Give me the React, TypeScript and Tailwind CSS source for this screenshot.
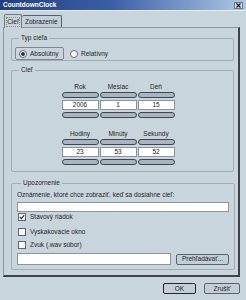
import * as React from "react";

const Pill = () => (
  <div className="h-[6px] w-full rounded-full border border-[#3d4751] bg-[#a9b4be]" />
);

const Spinner: React.FC<{ label: string; value: string }> = ({ label, value }) => (
  <div className="flex w-[37px] flex-col items-stretch">
    <span className="h-[8px] text-center leading-[8px]">{label}</span>
    <div className="mt-[1px]">
      <Pill />
    </div>
    <div className="mt-[2px] flex h-[10px] items-center justify-center border border-[#8a959e] bg-white leading-[8px]">
      {value}
    </div>
    <div className="mt-[2px]">
      <Pill />
    </div>
  </div>
);

const Check: React.FC<{ label: string; checked?: boolean; className?: string }> = ({
  label,
  checked,
  className,
}) => (
  <div className={`flex items-center pl-[1px] ${className ?? "h-[13px]"}`}>
    <span className="flex h-[8px] w-[8px] items-center justify-center border border-[#5d6770] bg-white">
      {checked && (
        <svg width="6" height="6" viewBox="0 0 6 6">
          <path d="M0.8 3 L2.4 4.6 L5.2 1.2" fill="none" stroke="#222" strokeWidth="1.1" />
        </svg>
      )}
    </span>
    <span className="ml-[4px] leading-[8px]">{label}</span>
  </div>
);

const Group: React.FC<{ title: string; className?: string; children: React.ReactNode }> = ({
  title,
  className,
  children,
}) => (
  <fieldset className={`m-0 rounded-[2px] border border-[#a2acb5] px-[3px] ${className ?? ""}`}>
    <legend className="ml-[4px] px-[2px] leading-[8px]">{title}</legend>
    {children}
  </fieldset>
);

export default function App() {
  return (
    <div className="flex h-[300px] w-[246px] flex-col overflow-hidden bg-[#c9d5dd] font-['Liberation_Sans',Arial,sans-serif] text-[6.5px] text-[#222]">
      {/* title bar */}
      <div className="flex h-[11px] items-center justify-between border-b border-[#e4ebf1] bg-[linear-gradient(to_right,#22407e,#3a5ea6_45%,#afc8e4)] pl-[3px] pr-[3px]">
        <span className="font-bold leading-[8px] text-white">CountdownClock</span>
        <span className="flex h-[7px] w-[9px] items-center justify-center border border-[#6d7a86] bg-[#d9e1e8]">
          <svg width="5" height="5" viewBox="0 0 5 5">
            <path d="M0.5 0.5 L4.5 4.5 M4.5 0.5 L0.5 4.5" stroke="#111" strokeWidth="1.2" />
          </svg>
        </span>
      </div>

      <div className="flex flex-col pl-[3px] pt-[3px]">
        {/* tabs */}
        <div className="flex h-[13px] items-end pl-[1px]">
          <div className="relative z-10 -mb-[1px] flex h-[14px] w-[18px] items-center justify-center rounded-t-[2px] border border-b-0 border-[#6e7a85] bg-[#c9d5dd]">
            <span className="leading-[8px] outline-1 outline-dotted outline-[#8a8a8a]">Cieľ</span>
          </div>
          <div className="flex h-[12px] items-center rounded-t-[2px] border border-b-0 border-l-0 border-[#55606a] bg-[#c3cfd8] px-[3px] leading-[8px]">
            Zobrazenie
          </div>
        </div>

        {/* panel */}
        <div className="flex h-[250px] w-[237px] flex-col border border-b-[2px] border-r-[2px] border-[#8b97a1] border-b-[#3c434a] border-r-[#3c434a] pl-[7px] pr-[4px] pt-[6px]">
          <Group title="Typ cieľa">
            <div className="flex items-center pt-[5px]">
              <div className="flex h-[13px] w-[49px] items-center rounded-[2px] border border-[#7d8892] pl-[3px]">
                <span className="flex h-[8px] w-[8px] items-center justify-center rounded-full border border-[#5d6770] bg-white">
                  <span className="h-[4px] w-[4px] rounded-full bg-[#333]" />
                </span>
                <span className="ml-[3px] leading-[8px]">Absolútny</span>
              </div>
              <div className="ml-[6px] flex items-center">
                <span className="h-[8px] w-[8px] rounded-full border border-[#5d6770] bg-white" />
                <span className="ml-[3px] leading-[8px]">Relatívny</span>
              </div>
            </div>
          </Group>

          <Group title="Cieľ" className="mt-[5px] pb-[6px]">
            <div className="flex justify-center gap-[1px] pr-[9px] pt-[9px]">
              <Spinner label="Rok" value="2006" />
              <Spinner label="Mesiac" value="1" />
              <Spinner label="Deň" value="15" />
            </div>
            <div className="mt-[12px] flex justify-center gap-[1px] pr-[9px]">
              <Spinner label="Hodiny" value="23" />
              <Spinner label="Minúty" value="53" />
              <Spinner label="Sekundy" value="52" />
            </div>
          </Group>

          <Group title="Upozornenie" className="mt-[7px] px-[5px] pb-[4px]">
            <div className="pt-[4px] leading-[8px]">
              Oznámenie, ktoré chce zobraziť, keď sa dosiahne cieľ:
            </div>
            <div className="mt-[3px] h-[10px] border border-[#8a959e] bg-white" />
            <div className="flex flex-col">
              <Check label="Stavový riadok" checked className="h-[9px]" />
              <Check label="Vyskakovacie okno" className="mt-[4px] h-[13px]" />
              <Check label="Zvuk (.wav súbor)" />
            </div>
            <div className="mt-[2px] flex items-center">
              <div className="h-[12px] w-[154px] border border-[#8a959e] bg-white" />
              <div className="ml-[5px] flex h-[11px] w-[53px] items-center justify-center rounded-[2px] border border-[#58636d] bg-[#c3cfd8] leading-[8px]">
                Prehľadávať...
              </div>
            </div>
          </Group>
        </div>

        {/* buttons */}
        <div className="mt-[6px] flex w-[237px] justify-end gap-[8px]">
          <div className="flex h-[11px] w-[33px] items-center justify-center rounded-[2px] border-[1.5px] border-[#20262c] bg-[#c3cfd8] leading-[8px]">
            OK
          </div>
          <div className="flex h-[11px] w-[36px] items-center justify-center rounded-[2px] border border-[#58636d] bg-[#c3cfd8] leading-[8px]">
            Zrušiť
          </div>
        </div>
      </div>
    </div>
  );
}
